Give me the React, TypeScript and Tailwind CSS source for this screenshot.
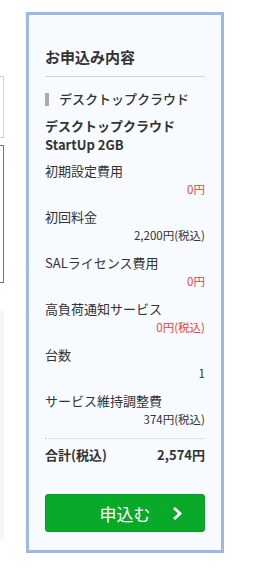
const rows = [
  { label: "初期設定費用", value: "0円", red: true },
  { label: "初回料金", value: "2,200円(税込)", red: false },
  { label: "SALライセンス費用", value: "0円", red: true },
  { label: "高負荷通知サービス", value: "0円(税込)", red: true },
  { label: "台数", value: "1", red: false },
  { label: "サービス維持調整費", value: "374円(税込)", red: false },
];

export default function App() {
  return (
    <div
      className="flex h-[568px] w-[263px] items-start bg-white text-[#333]"
      style={{ fontFamily: '"Noto Sans CJK JP", "Noto Sans", sans-serif' }}
    >
      {/* left column, cut off by the window */}
      <div className="flex w-[4px] flex-col">
        <div className="mt-[76px] h-[62px] border border-l-0 border-[#d0d0d0]" />
        <div className="mt-[7px] h-[138px] border border-l-0 border-[#3c7fe4]" />
        <div className="mt-[28px] h-[229px] bg-[#f7f7f7]" />
      </div>

      {/* order summary */}
      <div className="ml-[22px] mt-[12px] flex h-[541px] w-[198px] flex-col border-[3px] border-[#9eb8e4] bg-[#f7faff] px-[16px] pt-[31px]">
        <h2 className="border-b border-[#d4d4d4] pb-[8px] text-[15px] font-bold leading-[22px]">
          お申込み内容
        </h2>

        <div className="mt-[12px] flex items-center">
          <span className="h-[13px] w-[4px] bg-[#aaaaaa]" />
          <span className="ml-[10px] text-[13px] font-medium leading-[20px]">
            デスクトップクラウド
          </span>
        </div>

        <p className="mt-[7px] text-[13px] font-bold leading-[19px]">
          デスクトップクラウド
          <br />
          StartUp 2GB
        </p>

        <div className="mt-[9px] flex flex-col gap-[12px]">
          {rows.map((r) => (
            <div key={r.label}>
              <div className="text-[13px] leading-[16px]">{r.label}</div>
              <div
                className={`mt-[2px] text-right text-[11.5px] leading-[16px] ${
                  r.red ? "text-[#e2473c]" : "text-[#333]"
                }`}
              >
                {r.value}
              </div>
            </div>
          ))}
        </div>

        <div className="mt-[11px] border-t border-dotted border-[#c8c8c8]" />

        <div className="mt-[6px] flex items-center justify-between text-[13px] font-bold leading-[20px]">
          <span>合計(税込)</span>
          <span>2,574円</span>
        </div>

        <button className="relative mt-[29px] flex h-[38px] items-center justify-center rounded-[3px] border border-[#0a9627] bg-[#09a92a] text-[17px] leading-none text-white">
          申込む
          <svg
            className="absolute right-[21px] top-[12px]"
            width="12"
            height="13"
            viewBox="0 0 12 13"
            fill="none"
            stroke="white"
            strokeWidth="2.8"
          >
            <polyline points="3,1 9,6.5 3,12" />
          </svg>
        </button>
      </div>
    </div>
  );
}
